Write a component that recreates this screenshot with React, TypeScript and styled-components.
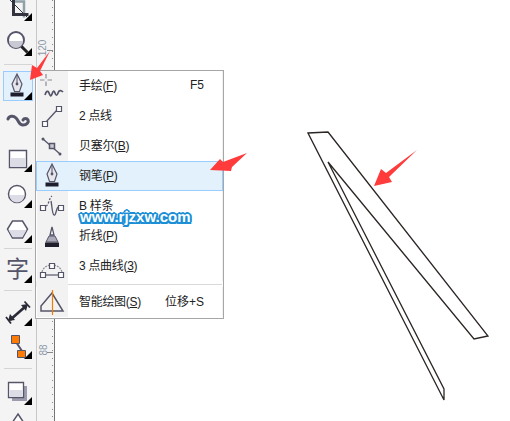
import React from 'react';
import styled, { createGlobalStyle } from 'styled-components';

const GlobalStyle = createGlobalStyle`
  html, body {
    margin: 0;
    padding: 0;
    background: #fff;
    overflow: hidden;
  }
`;

const Ink = '#55556a';
const Fill = '#dcdce6';

const Corner = () => <path d="M29 21v8h-8z" fill="#000" />;

const CropIcon = () => (
  <svg viewBox="0 0 30 30" width="30" height="30">
    <path d="M10 9.500h11v16" fill="none" stroke="#8fa0a6" strokeWidth="2.500" />
    <path d="M10.500 8v14.500h15" fill="none" stroke="#33333f" strokeWidth="3" />
    <path d="M6 7l18 18" stroke="#33333f" strokeWidth="1" />
    <Corner />
  </svg>
);

const ZoomIcon = () => (
  <svg viewBox="0 0 30 30" width="30" height="30">
    <circle cx="13" cy="13" r="8" fill="#fff" stroke={Ink} strokeWidth="2" />
    <path d="M6 14h14a7 7 0 0 1-14 0z" fill="#c9c9d4" />
    <path d="M18.500 19.500l6 6" stroke="#222" strokeWidth="3" />
    <Corner />
  </svg>
);

const PenIcon = () => (
  <svg viewBox="0 0 30 30" width="30" height="30">
    <path d="M14 3l-5 10 2.500 7.500h5L19 13z" fill="#e6e6ec" stroke={Ink} strokeWidth="1.200" />
    <path d="M14 4v8" stroke={Ink} strokeWidth="1" />
    <circle cx="14" cy="13" r="1.400" fill={Ink} />
    <path d="M7.500 21.500h13v4h-13z" fill="#1e1e2c" />
  </svg>
);

const CurveIcon = () => (
  <svg viewBox="0 0 30 30" width="30" height="30">
    <path d="M5 13c1-3 5-4 8-1s3 7 7 7 6-3 5-5-4-2-5 0" fill="none" stroke={Ink} strokeWidth="3" strokeLinecap="round" />
  </svg>
);

const RectIcon = () => (
  <svg viewBox="0 0 30 30" width="30" height="30">
    <path d="M6.500 7.500h17v17h-17z" fill="#fff" stroke={Ink} strokeWidth="1.400" />
    <path d="M7.500 15h15v9h-15z" fill={Fill} />
    <Corner />
  </svg>
);

const EllipseIcon = () => (
  <svg viewBox="0 0 30 30" width="30" height="30">
    <circle cx="14" cy="15" r="8.500" fill="#fff" stroke={Ink} strokeWidth="1.500" />
    <path d="M6.500 16h15a7.500 7.500 0 0 1-15 0z" fill={Fill} />
    <Corner />
  </svg>
);

const HexIcon = () => (
  <svg viewBox="0 0 30 30" width="30" height="30">
    <path d="M9.500 7h10l5 8-5 9h-10l-5-9z" fill="#fff" stroke={Ink} strokeWidth="1.500" />
    <path d="M5.500 16h18l-4 7h-10z" fill={Fill} />
    <Corner />
  </svg>
);

const DimensionIcon = () => (
  <svg viewBox="0 0 30 30" width="30" height="30">
    <path d="M7 23L23 9" stroke="#2b2b38" strokeWidth="2.600" />
    <path d="M5 24l2-7 5 6zM25 7l-2 7-5-6z" fill="#2b2b38" />
    <path d="M3 20l5 6.500M21.500 4.500l5.500 6" stroke="#2b2b38" strokeWidth="1.800" />
    <Corner />
  </svg>
);

const ConnectorIcon = () => (
  <svg viewBox="0 0 30 30" width="30" height="30">
    <path d="M13 12l6 9" stroke={Ink} strokeWidth="2" />
    <path d="M8.500 5.500h8v8h-8zM14.500 20.500h8v7h-8z" fill="#ff7a00" stroke={Ink} strokeWidth="1" />
    <Corner />
  </svg>
);

const ShadowIcon = () => (
  <svg viewBox="0 0 30 30" width="30" height="30">
    <path d="M9 10h15v15H9z" fill="#9c9cae" />
    <path d="M5.500 6.500h15v15h-15z" fill="#fff" stroke={Ink} strokeWidth="1.300" />
    <path d="M6.500 14h13v7h-13z" fill={Fill} />
    <Corner />
  </svg>
);

const TransparencyIcon = () => (
  <svg viewBox="0 0 30 30" width="30" height="30">
    <path d="M15 6l8 12H7z" fill="#fff" stroke={Ink} strokeWidth="1.500" />
    <path d="M9 14h12l3 6H6z" fill={Fill} />
  </svg>
);

const FreehandMenuIcon = () => (
  <svg viewBox="0 0 30 30" width="30" height="30">
    <path d="M8 3v4.500M8 10.500v4.500M2 9h4.500M9.500 9H14" stroke="#8a8a98" strokeWidth="1.200" />
    <path d="M7 24c1-4 3-5 4-2s2 4 3 1 2-4 3-1 2 3 3 0 3-3 5-1" fill="none" stroke={Ink} strokeWidth="1.700" />
  </svg>
);

const TwoPointIcon = () => (
  <svg viewBox="0 0 30 30" width="30" height="30">
    <path d="M8 21L19 9" stroke={Ink} strokeWidth="1.300" />
    <path d="M4.500 20.500h5v5h-5zM18.500 5.500h5v5h-5z" fill="#fff" stroke={Ink} strokeWidth="1.200" />
  </svg>
);

const BezierIcon = () => (
  <svg viewBox="0 0 30 30" width="30" height="30">
    <path d="M5 8l17 15" stroke={Ink} strokeWidth="1.300" />
    <path d="M11.500 12.500h5v5h-5z" fill="#c9c9d4" stroke={Ink} strokeWidth="1.500" />
    <circle cx="5" cy="8" r="1.500" fill={Ink} />
    <circle cx="22" cy="23" r="1.500" fill={Ink} />
  </svg>
);

const BSplineIcon = () => (
  <svg viewBox="0 0 30 30" width="30" height="30">
    <path d="M2.500 14.500h5v5h-5zM20.500 14.500h5v5h-5z" fill="#fff" stroke={Ink} strokeWidth="1.200" />
    <path d="M8 15c3-1 3-8 6-10" fill="none" stroke={Ink} strokeWidth="1.300" strokeDasharray="2 1.500" />
    <path d="M13 10c1 4 1 13 3 14s2-6 4-8" fill="none" stroke={Ink} strokeWidth="1.300" />
  </svg>
);

const PolylineIcon = () => (
  <svg viewBox="0 0 30 30" width="30" height="30">
    <path d="M14 6l-2 8h4z" fill="#fff" stroke={Ink} strokeWidth="1.300" />
    <path d="M11 15h6l3 6H8z" fill="#a9a9b8" stroke={Ink} strokeWidth="1" />
    <path d="M7 21.500h14v4.500H7z" fill="#1e1e2c" />
  </svg>
);

const ThreePointIcon = () => (
  <svg viewBox="0 0 30 30" width="30" height="30">
    <path d="M4 21c1-4 4-6 8-7M16 14c4 1 7 3 8 7" fill="none" stroke="#8a8a98" strokeWidth="1.200" strokeDasharray="2 1" />
    <path d="M7 24h13" stroke={Ink} strokeWidth="1.200" />
    <path d="M11.500 12.500h5v5h-5zM2.500 21.500h5v5h-5zM20.500 21.500h5v5h-5z" fill="#fff" stroke={Ink} strokeWidth="1.200" />
  </svg>
);

const SmartIcon = () => (
  <svg viewBox="0 0 30 30" width="30" height="30">
    <path d="M3 24v-5L14 6l11 18z" fill="none" stroke={Ink} strokeWidth="1.500" />
    <path d="M14.500 3v25" stroke="#f07d00" strokeWidth="1.200" />
  </svg>
);

const Arrow = ({ d }: { d: string }) => <path d={d} fill="#ff3b3b" />;

const Page = styled.div`
  position: relative;
  display: flex;
  width: 510px;
  height: 421px;
  overflow: hidden;
  background: #fff;
  font-family: "Liberation Sans", "Noto Sans CJK SC", sans-serif;
`;

const Toolbar = styled.div`
  flex: none;
  display: flex;
  flex-direction: column;
  align-items: center;
  box-sizing: border-box;
  width: 36px;
  height: 421px;
  padding-right: 1px;
  background: #f4f4f4;
`;

const Tool = styled.div<{ $top?: number; $active?: boolean }>`
  flex: none;
  display: flex;
  align-items: center;
  justify-content: center;
  box-sizing: border-box;
  width: 30px;
  height: 30px;
  margin-top: ${(p) => p.$top ?? 0}px;
  font-size: 23px;
  line-height: 1;
  color: ${Ink};
  position: relative;
  border: 1px solid ${(p) => (p.$active ? '#99ccff' : 'transparent')};
  background: ${(p) => (p.$active ? '#e3f1fd' : 'transparent')};

  svg {
    flex: none;
  }
`;

const TextCorner = styled.span`
  position: absolute;
  right: 0;
  bottom: 0;
  width: 0;
  height: 0;
  border-left: 8px solid transparent;
  border-bottom: 8px solid #000;
`;

const ToolRule = styled.div<{ $top: number }>`
  flex: none;
  width: 28px;
  height: 1px;
  margin-top: ${(p) => p.$top}px;
  background: #d5d5d5;
`;

const Ruler = styled.div`
  flex: none;
  position: relative;
  box-sizing: border-box;
  width: 19px;
  height: 421px;
  border-left: 1px solid #c8c8c8;
  border-right: 1px solid #777;
  background-color: #f4f4f4;
  background-image: repeating-linear-gradient(
    to bottom,
    #8a8a8a 0,
    #8a8a8a 1px,
    transparent 1px,
    transparent 7.300px
  );
  background-size: 1px 100%;
  background-repeat: no-repeat;
  background-position: right 1px top 0;
`;

const RulerLabel = styled.span<{ $y: number; $x: number }>`
  position: absolute;
  left: ${(p) => p.$x}px;
  top: ${(p) => p.$y}px;
  transform: rotate(-90deg);
  font-size: 10px;
  line-height: 10px;
  color: #8c99aa;
`;

const RulerTick = styled.span<{ $y: number }>`
  position: absolute;
  right: 1px;
  top: ${(p) => p.$y}px;
  width: 6px;
  height: 1px;
  background: #8a8a8a;
`;

const Canvas = styled.div`
  flex: 1;
  position: relative;
`;

const Drawing = styled.svg`
  position: absolute;
  left: 0;
  top: 0;
`;

const Menu = styled.div`
  position: absolute;
  left: 35px;
  top: 70px;
  box-sizing: border-box;
  width: 189px;
  height: 249px;
  background: #fff;
  border: 1px solid #a6a6a6;
  color: #222;
  display: flex;
  flex-direction: column;
`;

const Row = styled.div<{ $active?: boolean }>`
  flex: none;
  display: flex;
  align-items: center;
  box-sizing: border-box;
  height: 30px;
  font-size: 12px;
  border: 1px solid ${(p) => (p.$active ? '#99ccff' : 'transparent')};
  background: ${(p) => (p.$active ? '#e3f1fd' : 'transparent')};
  background-image: ${(p) =>
    p.$active ? 'none' : 'linear-gradient(to right, #f2f2f2 31px, transparent 31px)'};
`;

const RowIcon = styled.span`
  flex: none;
  display: flex;
  align-items: center;
  justify-content: center;
  width: 31px;
  height: 28px;
`;

const RowLabel = styled.span`
  flex: 1;
  padding-left: 11px;
  padding-bottom: 3px;
  box-sizing: border-box;
  white-space: pre;
  letter-spacing: -0.3px;

  u {
    text-underline-offset: 1px;
  }
`;

const Shortcut = styled.span`
  white-space: nowrap;
  margin-right: 18px;
  padding-bottom: 3px;
`;

const MenuRule = styled.div`
  flex: none;
  height: 6px;
  display: flex;
  align-items: center;
  background: linear-gradient(to right, #f2f2f2 32px, transparent 32px);

  &::after {
    content: '';
    display: block;
    width: 154px;
    margin-left: 32px;
    height: 1px;
    background: #d9d9d9;
  }
`;

const Watermark = styled.div`
  position: absolute;
  left: 80px;
  top: 208px;
  font-family: "Liberation Sans", sans-serif;
  font-size: 15px;
  font-weight: 700;
  line-height: 18px;
  color: #fff;
  text-shadow:
    -2px 0 0 #1b8ed6, 2px 0 0 #1b8ed6, 0 -2px 0 #1b8ed6, 0 2px 0 #1b8ed6,
    -1.500px -1.500px 0 #1b8ed6, 1.500px -1.500px 0 #1b8ed6,
    -1.500px 1.500px 0 #1b8ed6, 1.500px 1.500px 0 #1b8ed6;
`;

const Overlay = styled.svg`
  position: absolute;
  left: 0;
  top: 0;
  pointer-events: none;
`;

const items = [
  { icon: <FreehandMenuIcon />, label: <>手绘(<u>F</u>)</>, key: 'F5' },
  { icon: <TwoPointIcon />, label: <>2 点线</> },
  { icon: <BezierIcon />, label: <>贝塞尔(<u>B</u>)</> },
  { icon: <PenIcon />, label: <>钢笔(<u>P</u>)</>, active: true },
  { icon: <BSplineIcon />, label: <>B 样条</> },
  { icon: <PolylineIcon />, label: <>折线(<u>P</u>)</> },
  { icon: <ThreePointIcon />, label: <>3 点曲线(<u>3</u>)</> },
];

export default function App() {
  return (
    <Page>
      <GlobalStyle />
      <Toolbar>
        <Tool $top={-8}><CropIcon /></Tool>
        <Tool $top={5}><ZoomIcon /></Tool>
        <ToolRule $top={7} />
        <Tool $top={6} $active><PenIcon /><TextCorner /></Tool>
        <Tool $top={5}><CurveIcon /></Tool>
        <Tool $top={7}><RectIcon /></Tool>
        <Tool $top={6}><EllipseIcon /></Tool>
        <Tool $top={5}><HexIcon /></Tool>
        <ToolRule $top={4} />
        <Tool $top={5}>字<TextCorner /></Tool>
        <ToolRule $top={6} />
        <Tool $top={6}><DimensionIcon /></Tool>
        <Tool $top={3}><ConnectorIcon /></Tool>
        <ToolRule $top={8} />
        <Tool $top={7}><ShadowIcon /></Tool>
        <Tool $top={2}><TransparencyIcon /></Tool>
      </Toolbar>
      <Ruler>
        <RulerLabel $x={-2} $y={43}>120</RulerLabel>
        <RulerTick $y={50} />
        <RulerLabel $x={1} $y={345}>88</RulerLabel>
        <RulerTick $y={352} />
      </Ruler>
      <Canvas>
        <Drawing width="455" height="421" viewBox="55 0 455 421">
          <path
            d="M308 133L328 132L488 336L474 339L328 162L444 389L444 400Z"
            fill="#fff"
            stroke="#2b2523"
            strokeWidth="1.300"
            strokeLinejoin="miter"
          />
        </Drawing>
      </Canvas>
      <Menu>
        {items.map((item, i) => (
          <Row key={i} $active={item.active}>
            <RowIcon>{item.icon}</RowIcon>
            <RowLabel>{item.label}</RowLabel>
            {item.key && <Shortcut>{item.key}</Shortcut>}
          </Row>
        ))}
        <MenuRule />
        <Row>
          <RowIcon><SmartIcon /></RowIcon>
          <RowLabel>智能绘图(<u>S</u>)</RowLabel>
          <Shortcut>位移+S</Shortcut>
        </Row>
      </Menu>
      <Watermark>www.rjzxw.com</Watermark>
      <Overlay width="510" height="421" viewBox="0 0 510 421">
        <Arrow d="M50 51L37 68L32 65L30 80L43 75L40 71Z" />
        <Arrow d="M247 153L223 162L220 159L210 170L231 171L232 167Z" />
        <Arrow d="M417 150L386 173L381 169L374 186L392 182L389 177Z" />
      </Overlay>
    </Page>
  );
}
